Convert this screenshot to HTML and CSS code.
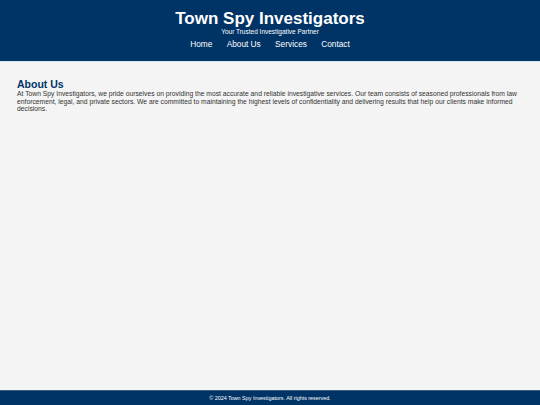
FILE: index.html
```html
<!DOCTYPE html>
<html lang="en">
<head>
  <meta charset="UTF-8">
  <title>Town Spy Investigators</title>
  <link rel="stylesheet" href="styles.css">
</head>
<body>

  <header class="site-header">
    <h1>Town Spy Investigators</h1>
    <p class="tagline">Your Trusted Investigative Partner</p>
    <nav class="nav">
      <a href="#">Home</a>
      <a href="#">About Us</a>
      <a href="#">Services</a>
      <a href="#">Contact</a>
    </nav>
  </header>

  <main class="content">
    <section class="about">
      <h2>About Us</h2>
      <p>At Town Spy Investigators, we pride ourselves on providing the most accurate and reliable investigative services. Our team consists of seasoned professionals from law enforcement, legal, and private sectors. We are committed to maintaining the highest levels of confidentiality and delivering results that help our clients make informed decisions.</p>
    </section>
  </main>

  <footer class="site-footer">
    &copy; 2024 Town Spy Investigators. All rights reserved.
  </footer>

</body>
</html>
```

FILE: styles.css
```css
body {
  margin: 0;
  font-family: "Liberation Sans", Arial, sans-serif;
  background: #f4f4f4;
  color: #333;
  display: flex;
  flex-direction: column;
  min-height: 100vh;
}

.site-header {
  background: #003366;
  color: white;
  text-align: center;
  padding: 9px 0 12px;
  border-bottom: 1px solid #d3e6f5;
}

.site-header h1 {
  margin: 0;
  font-size: 17px;
  line-height: 19px;
}

.tagline {
  margin: 0;
  font-size: 6.5px;
  line-height: 8px;
}

.nav {
  margin-top: 3px;
  font-size: 8.3px;
  line-height: 10px;
}

.nav a {
  color: white;
  text-decoration: none;
  margin: 0 6px;
}

.content {
  flex: 1;
  padding: 16px 17px;
}

.about h2 {
  margin: 0;
  font-size: 10.5px;
  line-height: 12px;
  color: #003366;
}

.about p {
  margin: 0;
  font-size: 6.75px;
  line-height: 7.5px;
}

.site-footer {
  background: #003366;
  color: white;
  text-align: center;
  font-size: 5.4px;
  line-height: 6px;
  padding: 4px 0 4px;
  border-top: 1px solid #3d5f80;
}
```
